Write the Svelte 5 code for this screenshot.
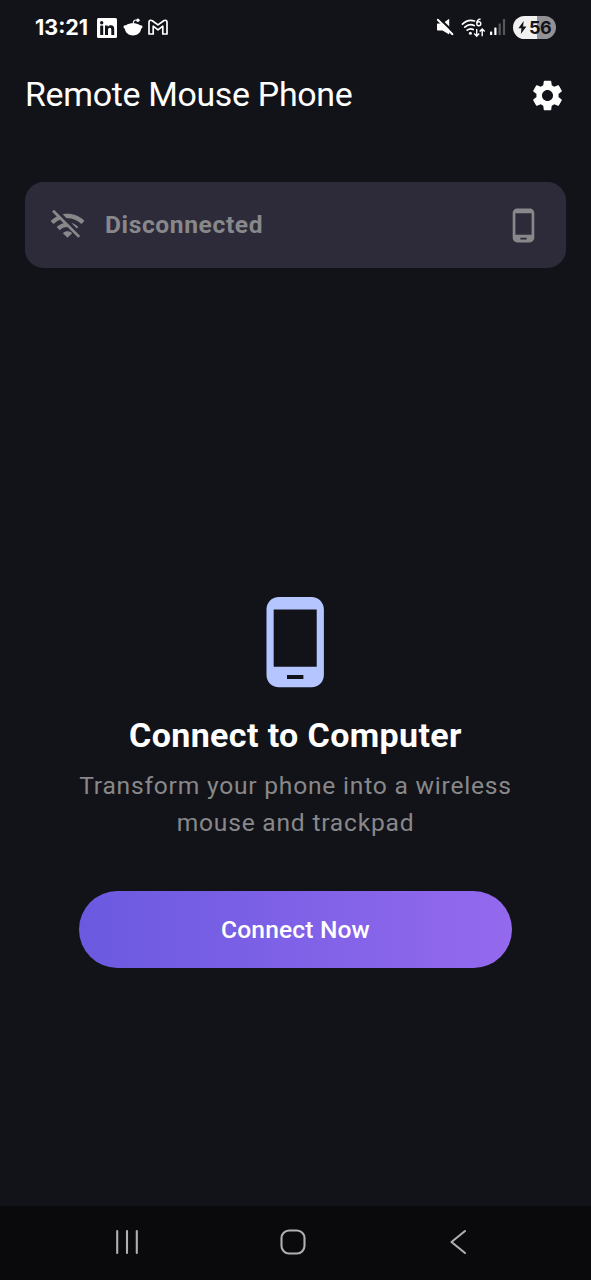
<script>
  const phonePath =
    'M16 1H8C6.34 1 5 2.34 5 4v16c0 1.66 1.34 3 3 3h8c1.66 0 3-1.34 3-3V4c0-1.66-1.34-3-3-3zm-2 20h-4v-1h4v1zm3.25-3H6.75V4h10.5v14z';
</script>

<div class="screen">
  <header class="status">
    <div class="left">
      <span class="time">13:21</span>
      <svg class="linkedin" width="20" height="20" viewBox="0 0 20 20">
        <rect width="20" height="20" rx="1.5" fill="#fff" />
        <g fill="#121318">
          <circle cx="4.7" cy="4.7" r="1.7" />
          <rect x="3.2" y="7.6" width="3" height="9.4" />
          <path d="M8 7.6h2.8v1.3c.6-1 1.600-1.600 3-1.600 2.500 0 3.400 1.500 3.400 4.100V17h-2.900v-5c0-1.400-.4-2.200-1.500-2.200-1.300 0-1.800.9-1.800 2.300V17H8z" />
        </g>
      </svg>
      <svg class="reddit" width="20" height="18" viewBox="0 0 20 18">
        <path d="M3 7.300C5 5.900 7.400 5.300 10 5.300s5 .6 7 2c1.500-.5 2.700.5 2.500 1.800-.1.900-.7 1.300-1.400 1.700-.3 4-4 6.700-8.100 6.700s-7.800-2.700-8.100-6.700C1.200 10.400.600 10 .5 9.100.3 7.800 1.500 6.800 3 7.300z" fill="#fff" />
        <path d="M10.200 6c0-2.800 1-4.200 3-4" fill="none" stroke="#fff" stroke-width="1.100" />
        <circle cx="14.900" cy="2.200" r="1.700" fill="#fff" />
      </svg>
      <svg class="gmail" width="20" height="16" viewBox="0 0 20 16">
        <path d="M1 3.100C1 1.100 3 .9 4.300 1.700L10 5.900l5.700-4.200C17 .9 19 1.100 19 3.100V15h-4.200V7.200L10 10.900 5.200 7.200V15H1z" fill="none" stroke="#fff" stroke-width="1.700" stroke-linejoin="round" />
      </svg>
    </div>
    <div class="right">
      <svg class="mute" width="18" height="18" viewBox="0 0 18 18">
        <path d="M2 5.500h4.500L13.200.8v15.700L6.500 12.500H2c-.6 0-1-.4-1-1v-5c0-.6.4-1 1-1z" fill="#fff" />
        <path d="M2.800 0 18 14.500" stroke="#121318" stroke-width="2.200" />
        <path d="M1.800 1.700 16.500 16.200" stroke="#fff" stroke-width="1.900" stroke-linecap="round" />
      </svg>
      <svg class="wifi" width="25" height="20" viewBox="0 0 25 20">
        <g fill="none" stroke="#fff" stroke-width="1.700" stroke-linecap="round">
          <path d="M1.500 6.200C4.800 2.800 9.500 1.700 13.500 3" />
          <path d="M3.800 9.200c3-2.700 6.200-3.200 9.400-1.700" />
          <path d="M6.200 12.200c1.800-1.500 4-1.700 6-.6" />
        </g>
        <circle cx="9.400" cy="15.200" r="1.500" fill="#fff" />
        <g fill="none" stroke="#fff" stroke-width="1.400">
          <path d="M19.600 1.300c-2.200-.4-3.800 1.400-3.800 3.900" />
          <circle cx="17.800" cy="5.700" r="2" />
          <path d="M15.700 11v7M13.200 15.600l2.500 2.600 2.500-2.600M21.200 18.200v-7M18.700 13.600l2.500-2.600 2.500 2.600" />
        </g>
      </svg>
      <svg class="signal" width="16" height="16" viewBox="0 0 16 16">
        <rect x="0" y="12.500" width="2.200" height="3.500" rx=".6" fill="#fff" />
        <rect x="4.300" y="8.500" width="2.200" height="7.500" rx=".6" fill="#fff" />
        <rect x="8.600" y="4.500" width="2.200" height="11.500" rx=".6" fill="#56575b" />
        <rect x="12.900" y="0" width="2.200" height="16" rx=".6" fill="#56575b" />
      </svg>
      <div class="battery">
        <svg width="9" height="13" viewBox="0 0 9 13">
          <path d="M5.700 0 .4 7.300h3.100L2.800 13l5.600-7.600H5.100z" fill="#121318" />
        </svg>
        <span>56</span>
      </div>
    </div>
  </header>

  <div class="appbar">
    <h1>Remote Mouse Phone</h1>
    <svg width="37" height="37" viewBox="0 0 24 24">
      <path fill="#fff" d="M19.140 12.940c.04-.3.060-.610.060-.940 0-.320-.020-.640-.070-.940l2.030-1.580c.180-.140.230-.410.120-.610l-1.920-3.320c-.120-.220-.370-.290-.590-.220l-2.390.960c-.5-.380-1.030-.7-1.620-.940l-.360-2.540c-.040-.240-.240-.410-.480-.410h-3.840c-.240 0-.430.170-.470.410l-.360 2.540c-.590.240-1.130.570-1.620.940l-2.390-.960c-.220-.080-.470 0-.590.220L2.740 8.870c-.120.210-.080.470.120.610l2.030 1.580c-.050.3-.090.630-.090.940s.020.640.070.940l-2.030 1.580c-.180.140-.230.410-.120.610l1.920 3.320c.120.220.370.290.590.220l2.390-.960c.5.380 1.030.7 1.620.940l.360 2.540c.050.240.240.410.480.410h3.840c.240 0 .440-.170.470-.410l.360-2.540c.590-.240 1.130-.560 1.620-.940l2.390.960c.220.080.470 0 .590-.220l1.920-3.320c.120-.220.070-.470-.120-.610l-2.010-1.580zM12 15.600c-1.980 0-3.600-1.620-3.600-3.600s1.620-3.600 3.600-3.600 3.600 1.620 3.600 3.600-1.620 3.600-3.600 3.600z" />
    </svg>
  </div>

  <section class="card">
    <svg width="37" height="37" viewBox="0 0 24 24">
      <path fill="#88888a" d="M22.990 9C19.150 5.160 13.800 3.760 8.840 4.780l2.520 2.520c3.470-.17 6.990 1.050 9.630 3.700l2-2zm-4 4c-1.290-1.290-2.840-2.130-4.490-2.560l3.530 3.530.96-.97zM2 3.050L5.070 6.100C3.600 6.820 2.220 7.780 1 9l1.990 2c1.240-1.240 2.670-2.160 4.200-2.770l2.240 2.240C7.810 10.890 6.270 11.730 5 13v.01L6.990 15c1.360-1.360 3.140-2.040 4.920-2.060L18.980 20l1.270-1.260L3.290 1.790 2 3.050zM9 17l3 3 3-3c-1.650-1.660-4.340-1.660-6 0z" />
    </svg>
    <span>Disconnected</span>
    <svg width="37" height="37" viewBox="0 0 24 24"><path fill="#88888a" d={phonePath} /></svg>
  </section>

  <main>
    <svg width="98.400" height="98.400" viewBox="0 0 24 24"><path fill="#b4c5ff" d={phonePath} /></svg>
    <h2>Connect to Computer</h2>
    <p>Transform your phone into a wireless mouse and trackpad</p>
    <button>Connect Now</button>
  </main>

  <nav>
    <svg width="24" height="26" viewBox="0 0 24 26">
      <path d="M2.200 2v22M12 2v22M21.800 2v22" stroke="#b0b0b2" stroke-width="2.100" stroke-linecap="round" />
    </svg>
    <svg width="26" height="26" viewBox="0 0 26 26">
      <rect x="1.500" y="1.500" width="23" height="23" rx="7.500" fill="none" stroke="#b0b0b2" stroke-width="2.100" />
    </svg>
    <svg width="18" height="26" viewBox="0 0 18 26">
      <path d="M16 2 2.500 13 16 24" fill="none" stroke="#b0b0b2" stroke-width="2.100" stroke-linecap="round" stroke-linejoin="round" />
    </svg>
  </nav>
</div>

<style>
  :global(body) {
    margin: 0;
    background: #121318;
  }
  .screen {
    box-sizing: border-box;
    width: 591px;
    height: 1280px;
    display: flex;
    flex-direction: column;
    overflow: hidden;
    background: #121318;
    color: #fff;
    font-family: Roboto, sans-serif;
  }
  svg {
    display: block;
    flex: none;
  }
  .status {
    display: flex;
    justify-content: space-between;
    height: 54px;
    padding: 0 35px;
  }
  .left,
  .right {
    display: flex;
    align-items: center;
  }
  .time {
    width: 62px;
    font: 700 21.500px/54px Inter, sans-serif;
  }
  .linkedin {
    margin-top: 1px;
  }
  .reddit {
    margin-left: 6px;
  }
  .gmail {
    margin-left: 5px;
  }
  .wifi {
    margin: 1px 0 0 7px;
  }
  .signal {
    margin-left: 4px;
  }
  .battery {
    box-sizing: border-box;
    display: flex;
    align-items: center;
    gap: 2px;
    width: 43px;
    height: 23px;
    margin-left: 7px;
    padding-left: 5px;
    border-radius: 12px;
    background: linear-gradient(90deg, #f1f1f2 56%, #929294 56%);
    color: #121318;
    font: 700 18px/23px Inter, sans-serif;
    letter-spacing: -0.600px;
  }
  .appbar {
    display: flex;
    align-items: center;
    justify-content: space-between;
    height: 82px;
    padding: 0 25px;
  }
  h1,
  h2,
  p {
    margin: 0;
  }
  h1 {
    padding-bottom: 2px;
    font-size: 33.900px;
    font-weight: 400;
    line-height: 43px;
    letter-spacing: -0.310px;
  }
  .card {
    box-sizing: border-box;
    display: flex;
    align-items: center;
    height: 86px;
    margin: 46px 25px 0;
    padding: 0 24.500px 0 24px;
    border-radius: 18.500px;
    background: #2d2b3a;
  }
  .card span {
    flex: 1;
    margin-left: 19px;
    padding-bottom: 2px;
    color: #88888a;
    font-size: 24.600px;
    font-weight: 700;
    letter-spacing: 0.600px;
  }
  main {
    flex: 1;
    display: flex;
    flex-direction: column;
    align-items: center;
    padding: 324.500px 79px 0;
  }
  h2 {
    margin-top: 23px;
    font-size: 34px;
    font-weight: 700;
    line-height: 43px;
    letter-spacing: 0.380px;
    white-space: nowrap;
  }
  p {
    width: 442px;
    margin-top: 10.500px;
    color: #88888a;
    font-size: 24.600px;
    line-height: 37px;
    letter-spacing: 0.780px;
    text-align: center;
  }
  button {
    width: 433px;
    height: 77px;
    margin-top: 49.600px;
    padding: 0;
    border: 0;
    border-radius: 39px;
    background: linear-gradient(90deg, #6a5ae0, #9469ee);
    color: #fff;
    font: 500 24.600px/37px Roboto, sans-serif;
    letter-spacing: 0.150px;
  }
  nav {
    display: grid;
    grid-template-columns: repeat(3, 165.500px);
    justify-items: center;
    align-items: center;
    box-sizing: border-box;
    height: 74px;
    padding: 0 0 3px 44.500px;
    background: #0a0a0c;
  }
</style>
